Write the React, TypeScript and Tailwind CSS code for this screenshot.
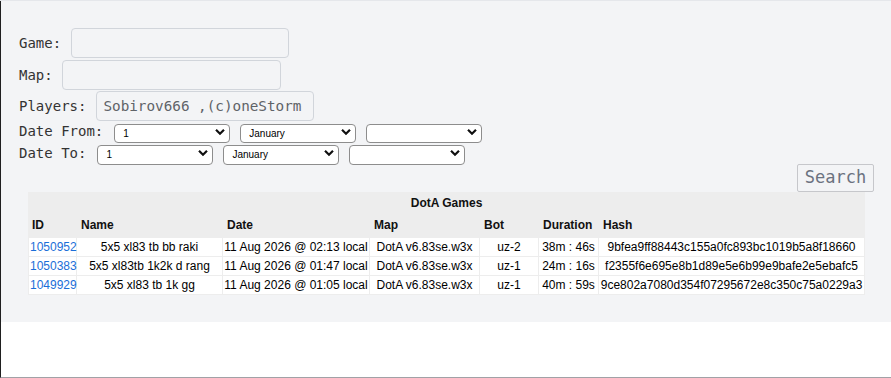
import { FC } from "react";

const mono = { fontFamily: '"DejaVu Sans Mono", monospace' };
const sans = { fontFamily: '"Liberation Sans", Arial, sans-serif' };

const Chevron: FC = () => (
  <svg
    className="pointer-events-none absolute right-[5px] top-1/2 -translate-y-1/2"
    width="10"
    height="7"
    viewBox="0 0 10 7"
  >
    <path d="M1 1.2 L5 5.2 L9 1.2" fill="none" stroke="#111" strokeWidth="2.2" />
  </svg>
);

const Select: FC<{ value: string; h: string }> = ({ value, h }) => (
  <div className={`relative w-[116px] ${h}`}>
    <select
      className="appearance-none w-full h-full bg-white border border-[#8d8d8d] rounded-[4px] pl-[8px] text-[10px] text-black outline-none"
      style={sans}
      defaultValue={value}
    >
      <option>{value}</option>
    </select>
    <Chevron />
  </div>
);

const games = [
  {
    id: "1050952",
    name: "5x5 xl83 tb bb raki",
    date: "11 Aug 2026 @ 02:13 local",
    map: "DotA v6.83se.w3x",
    bot: "uz-2",
    dur: "38m : 46s",
    hash: "9bfea9ff88443c155a0fc893bc1019b5a8f18660",
  },
  {
    id: "1050383",
    name: "5x5 xl83tb 1k2k d rang",
    date: "11 Aug 2026 @ 01:47 local",
    map: "DotA v6.83se.w3x",
    bot: "uz-1",
    dur: "24m : 16s",
    hash: "f2355f6e695e8b1d89e5e6b99e9bafe2e5ebafc5",
  },
  {
    id: "1049929",
    name: "5x5 xl83 tb 1k gg",
    date: "11 Aug 2026 @ 01:05 local",
    map: "DotA v6.83se.w3x",
    bot: "uz-1",
    dur: "40m : 59s",
    hash: "9ce802a7080d354f07295672e8c350c75a0229a3",
  },
];

const App: FC = () => {
  return (
    <div className="w-[891px] h-[378px] border-t border-[#e5e7eb] bg-white">
      <div className="h-full border-l border-l-[#1f1f1f] border-b border-b-[#a1a1a6]">
        <div className="bg-[#f3f4f6] pt-[27px] pb-[27px]">
          <div className="pl-[18px] text-[14px] text-[#333]" style={mono}>
            <div className="flex items-center gap-[10px] h-[30px] mb-[2px]">
              <span>Game:</span>
              <input className="w-[218px] h-[30px] border border-[#d1d5db] rounded-[4px] bg-transparent" />
            </div>
            <div className="flex items-center gap-[9px] h-[30px] mb-[1px]">
              <span>Map:</span>
              <input className="w-[219px] h-[30px] border border-[#d1d5db] rounded-[4px] bg-transparent" />
            </div>
            <div className="flex items-center gap-[10px] h-[30px] mb-[1px]">
              <span>Players:</span>
              <input
                className="w-[218px] h-[30px] border border-[#d1d5db] rounded-[4px] bg-transparent px-[6px] text-[#5f6368] text-[14.3px]"
                style={mono}
                defaultValue="Sobirov666 ,(c)oneStorm"
              />
            </div>
            <div className="flex items-start gap-[10px] h-[21px]">
              <span className="mr-[1px] leading-[19px]">Date From:</span>
              <Select value="1" h="h-[19px]" />
              <Select value="January" h="h-[19px]" />
              <Select value="" h="h-[19px]" />
            </div>
            <div className="flex items-start gap-[10px] h-[21px]">
              <span className="mr-[1px] leading-[20px]">Date To:</span>
              <Select value="1" h="h-5" />
              <Select value="January" h="h-5" />
              <Select value="" h="h-5" />
            </div>
          </div>
          <div className="flex justify-end pr-[17px]">
            <button
              className="h-[28px] w-[77px] border border-[#c6c7cb] rounded-[2px] bg-[#f3f4f6] text-[17px] text-[#6b7280]"
              style={mono}
            >
              Search
            </button>
          </div>
          <table
            className="ml-[27px] w-[837px] table-fixed border-separate border-spacing-[1px] bg-[#ededed] text-[12px] text-black"
            style={sans}
          >
            <colgroup>
              <col className="w-[47px]" />
              <col className="w-[145px]" />
              <col className="w-[146px]" />
              <col className="w-[109px]" />
              <col className="w-[58px]" />
              <col className="w-[59px]" />
              <col className="w-[265px]" />
            </colgroup>
            <thead>
              <tr className="h-[19px]">
                <th colSpan={7} className="font-bold text-center text-[#111] p-0">
                  DotA Games
                </th>
              </tr>
              <tr className="h-[24px]">
                <th className="text-left font-bold pl-[3px] text-[#111]">ID</th>
                <th className="text-left font-bold pl-[4px] text-[#111]">Name</th>
                <th className="text-left font-bold pl-[4px] text-[#111]">Date</th>
                <th className="text-left font-bold pl-[4px] text-[#111]">Map</th>
                <th className="text-left font-bold pl-[4px] text-[#111]">Bot</th>
                <th className="text-left font-bold pl-[4px] text-[#111]">Duration</th>
                <th className="text-left font-bold pl-[4px] text-[#111]">Hash</th>
              </tr>
            </thead>
            <tbody>
              {games.map((g) => (
                <tr key={g.id} className="h-[18px] bg-white">
                  <td className="pl-[1px] p-0 whitespace-nowrap">
                    <a href="#" className="text-[#1a6ed8]">
                      {g.id}
                    </a>
                  </td>
                  <td className="text-center p-0 whitespace-nowrap">{g.name}</td>
                  <td className="text-center p-0 whitespace-nowrap">{g.date}</td>
                  <td className="text-center p-0 whitespace-nowrap">{g.map}</td>
                  <td className="text-center p-0 whitespace-nowrap">{g.bot}</td>
                  <td className="text-center p-0 whitespace-nowrap">{g.dur}</td>
                  <td className="text-center p-0 whitespace-nowrap">{g.hash}</td>
                </tr>
              ))}
            </tbody>
          </table>
        </div>
      </div>
    </div>
  );
};

export default App;
